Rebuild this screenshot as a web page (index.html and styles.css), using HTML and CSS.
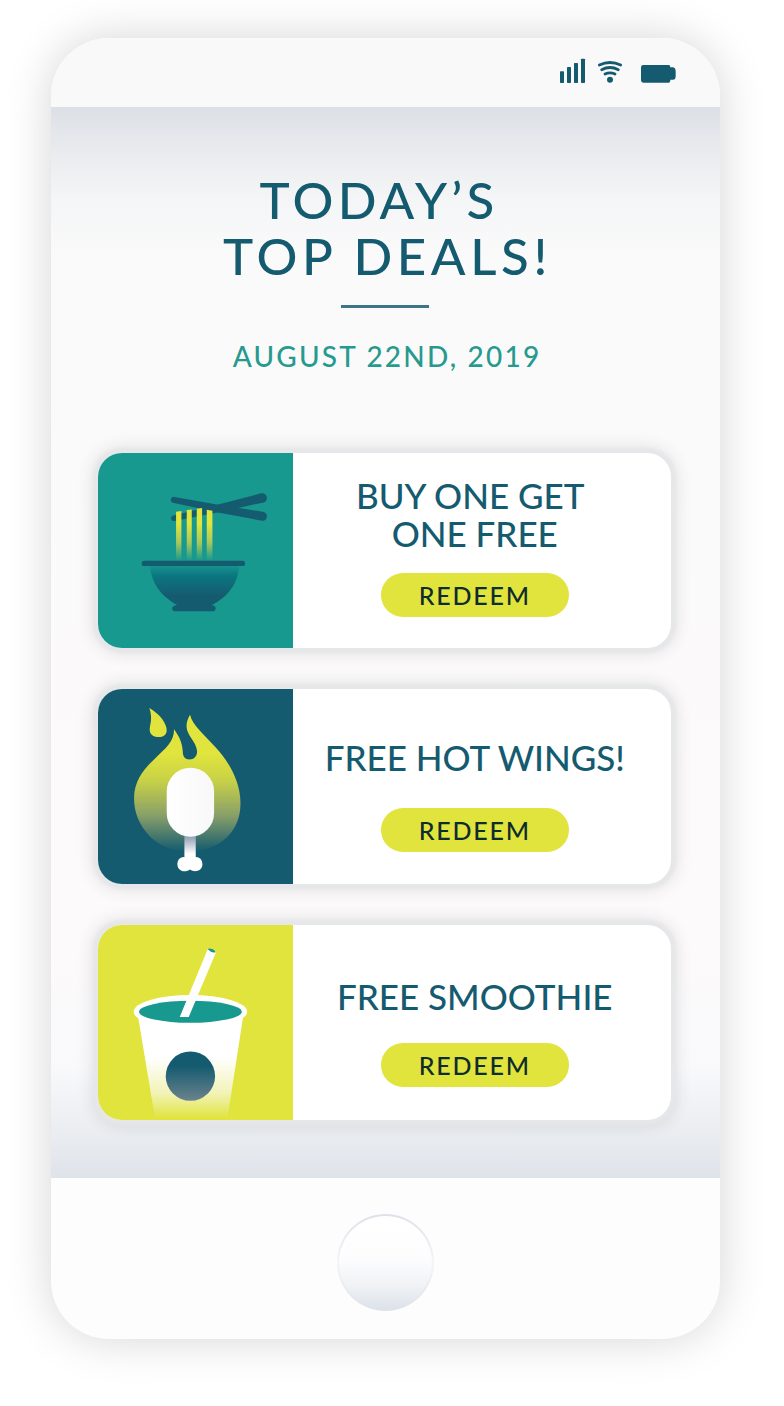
FILE: index.html
```
<!DOCTYPE html>
<html lang="en">
  <head>
    <meta charset="utf-8">
    <title>Today's Top Deals</title>
    <link rel="stylesheet" href="styles.css">
  </head>
  <body>
    <div class="phone">
      <!-- Status bar -->
      <header class="status-bar">
        <svg class="status-icons" viewBox="57 84 354 78">
          <g fill="#155b70">
            <rect x="60" y="124" width="12" height="35" rx="2"/>
            <rect x="81" y="111" width="12" height="48" rx="2"/>
            <rect x="102" y="99" width="12" height="60" rx="2"/>
            <rect x="123" y="86" width="12" height="73" rx="2"/>
            <circle cx="210" cy="149" r="9"/>
            <path d="M310 105H386Q391 105 391 112H400Q407 114 407 122V140Q407 148 400 149H391Q391 158 386 158H310Q303 158 303 151V112Q303 105 310 105Z"/>
          </g>
          <g fill="none" stroke="#155b70" stroke-width="8.5" stroke-linecap="round">
            <path d="M178 105Q210 90 242 105"/>
            <path d="M185 119Q210 106 235 119"/>
            <path d="M195 132Q210 125 225 132"/>
          </g>
        </svg>
      </header>

      <!-- Deals -->
      <main class="screen">
        <h1><span class="today">TODAY’S</span><span class="top">TOP DEALS!</span></h1>
        <div class="rule"></div>
        <p class="date">AUGUST 22ND, 2019</p>

        <div class="deals">
          <section class="card">
            <svg class="art noodles" viewBox="25 39 583 583">
              <defs>
                <linearGradient id="bowl" x1="0" y1="0" x2="0" y2="1">
                  <stop offset="0" stop-color="#17948e"/>
                  <stop offset=".25" stop-color="#0b7780"/>
                  <stop offset=".75" stop-color="#155b70"/>
                </linearGradient>
                <linearGradient id="noodle" gradientUnits="userSpaceOnUse" x1="0" y1="204" x2="0" y2="362">
                  <stop offset=".3" stop-color="#e0e43d"/>
                  <stop offset=".65" stop-color="#a9c85b"/>
                  <stop offset="1" stop-color="#17998f"/>
                </linearGradient>
              </defs>
              <g fill="#155b70">
                <path d="M251 170L385 194L519 215Q532 217 531 230Q530 243 516 242L384 217L249 188Q243 186 243 179Q244 171 251 170Z"/>
                <path d="M249 227L385 193L514 160Q526 157 531 170Q533 182 522 187L390 216L254 243Q246 244 244 236Q243 229 249 227Z"/>
              </g>
              <g fill="url(#noodle)">
                <path d="M259 215L275 213V362H259Z"/>
                <path d="M291 210L306 208V362H291Z"/>
                <path d="M321 206L337 204V362H321Z"/>
                <path d="M351 209L368 212V362H351Z"/>
              </g>
              <path d="M181 376H448C446 428 414 472 363 496H266C216 472 184 428 181 376Z" fill="url(#bowl)"/>
              <rect x="156" y="362" width="310" height="16" rx="8" fill="#155b70"/>
              <path d="M256 496L268 491H358L370 496Q378 498 378 505Q377 513 370 513H256Q248 513 247 505Q248 498 256 496Z" fill="#155b70"/>
            </svg>
            <div class="info info-noodles">
              <h2><span class="buy">BUY ONE GET</span><span>ONE FREE</span></h2>
              <button>REDEEM</button>
            </div>
          </section>

          <section class="card">
            <svg class="art wings" viewBox="25 28 583 583">
              <defs>
                <linearGradient id="flame" gradientUnits="userSpaceOnUse" x1="0" y1="85" x2="0" y2="515">
                  <stop offset=".32" stop-color="#e0e43d"/>
                  <stop offset=".5" stop-color="#c9d246"/>
                  <stop offset=".75" stop-color="#889f69"/>
                  <stop offset="1" stop-color="#155b70"/>
                </linearGradient>
                <linearGradient id="bone" x1="0" y1="0" x2="0" y2="1">
                  <stop offset="0" stop-color="#8292ac"/>
                  <stop offset=".25" stop-color="#a5afc3"/>
                  <stop offset=".8" stop-color="#fff"/>
                </linearGradient>
                <linearGradient id="meat">
                  <stop offset="0" stop-color="#fff"/>
                  <stop offset="1" stop-color="#f8f8f9"/>
                </linearGradient>
              </defs>
              <g fill="url(#flame)">
                <path d="M179 85C211 103 232 133 231 153C230 166 220 172 207 172C190 172 180 163 180 150C180 134 190 120 179 85Z"/>
                <path d="M253 149C267 169 277 186 279 214C279 232 286 239 299 239C313 239 322 229 322 215C321 191 299 174 292 151C288 135 292 119 301 105C308 137 342 163 378 203C417 246 454 307 452 374C451 459 386 515 293 515C202 515 133 441 133 356C133 305 161 270 190 242C228 205 253 187 253 149Z"/>
              </g>
              <rect x="284" y="460" width="34" height="78" fill="url(#bone)"/>
              <path d="M284 532C269 531 263 543 263 554C263 574 287 580 301 569C315 580 338 572 338 554C338 543 332 531 317 532Z" fill="#fff"/>
              <rect x="231" y="264" width="142" height="207" rx="71" fill="url(#meat)"/>
            </svg>
            <div class="info info-wings">
              <h2>FREE HOT WINGS!</h2>
              <button>REDEEM</button>
            </div>
          </section>

          <section class="card">
            <svg class="art smoothie" viewBox="25 31 583 583">
              <defs>
                <linearGradient id="cup" x1="0" y1="0" x2="0" y2="1">
                  <stop offset=".4" stop-color="#fff"/>
                  <stop offset=".75" stop-color="#f2f3b8"/>
                  <stop offset="1" stop-color="#e0e43d"/>
                </linearGradient>
                <linearGradient id="label" x1="0" y1="0" x2="0" y2="1">
                  <stop offset=".3" stop-color="#155b70"/>
                  <stop offset="1" stop-color="#6b838c"/>
                </linearGradient>
              </defs>
              <path d="M145 305H460L413 611H196Z" fill="url(#cup)"/>
              <ellipse cx="302" cy="291" rx="170" ry="50" fill="#fff"/>
              <ellipse cx="302" cy="291" rx="154" ry="33" fill="#17998f"/>
              <path d="M354 103L378 114L297 307H270Z" fill="#fff"/>
              <path d="M354 104Q357 99 367 103Q378 108 376 113Q366 116 354 104Z" fill="#17998f"/>
              <circle cx="302" cy="484" r="74" fill="url(#label)"/>
            </svg>
            <div class="info info-smoothie">
              <h2>FREE SMOOTHIE</h2>
              <button>REDEEM</button>
            </div>
          </section>
        </div>
      </main>

      <!-- Home button -->
      <footer class="bottom-bar">
        <div class="home"></div>
      </footer>
    </div>
  </body>
</html>
```
FILE: styles.css
```
body {
  margin: 0;
  background: #fff;
  font-family: "Lato", sans-serif;
  color: #155b70;
}

h1, h2, p {
  margin: 0;
  font-weight: 500;
}

h1 span, h2 span {
  display: block;
}

.phone {
  width: 669px;
  height: 1301px;
  margin: 38px 0 67px 51px;
  border-radius: 58px;
  overflow: hidden;
  display: flex;
  flex-direction: column;
  background: #fdfdfe;
  box-shadow: 0 0 46px rgba(0, 0, 0, 0.17);
}

/* Status bar */
.status-bar {
  height: 69px;
  display: flex;
  justify-content: flex-end;
  align-items: flex-start;
  padding: 20px 43px 0 0;
  box-sizing: border-box;
  background: #f9f9f9;
}
.status-icons {
  width: 118px;
  height: 26px;
}

/* Screen */
.screen {
  height: 1071px;
  box-sizing: border-box;
  padding: 65px 49px 0 47px;
  background: linear-gradient(#dce0e6 0, #e9ebee 45px, #f4f5f6 90px, #fafafb 150px, #fbfafb 300px, #fcfafb 850px, #f9f9fb 960px, #e9ecf0 1030px, #dfe3ea 1071px);
}

h1 {
  font-size: 51px;
  line-height: 56px;
  text-align: center;
}
.today {
  padding-right: 11px;
  letter-spacing: 4.2px;
}
.top {
  padding-left: 6px;
  letter-spacing: 4.6px;
}

.rule {
  width: 88px;
  height: 2.5px;
  margin: 21px auto 0 243px;
  background: #3f7487;
}

.date {
  margin-top: 31.5px;
  padding-left: 5px;
  font-size: 28px;
  line-height: 34px;
  text-align: center;
  letter-spacing: 2.2px;
  color: #279a8f;
}

/* Cards */
.deals {
  display: grid;
  gap: 41.5px;
  margin-top: 80px;
}
.card {
  height: 194.5px;
  display: flex;
  border-radius: 24px;
  background: #fff;
  box-shadow: 0 0 3px 5px #e6e7e9, 0 0 16px 6px rgba(60, 50, 60, 0.12);
}
.art {
  width: 194.5px;
  height: 194.5px;
  border-radius: 24px 0 0 24px;
}
.noodles {
  background: #17998f;
}
.wings {
  background: #155b70;
}
.smoothie {
  background: #e0e43d;
}

.info {
  flex: 1;
  display: flex;
  flex-direction: column;
  align-items: center;
  padding-right: 14px;
}
.info h2 {
  font-size: 35px;
  line-height: 38px;
  text-align: center;
}
.info-noodles {
  padding-top: 23px;
  gap: 21px;
}
.info-wings {
  padding-top: 48.5px;
  gap: 32px;
}
.info-smoothie {
  padding-top: 52px;
  gap: 28px;
}
.buy {
  padding-right: 9px;
}

button {
  width: 188px;
  height: 44px;
  padding: 0;
  border: none;
  border-radius: 22px;
  background: #e0e43d;
  font: 500 25px/44px "Lato", sans-serif;
  letter-spacing: 1.8px;
  color: #0f2c2c;
}

/* Home button */
.bottom-bar {
  flex: 1;
  display: flex;
  justify-content: center;
  align-items: flex-start;
  padding-top: 36px;
}
.home {
  width: 97px;
  height: 97px;
  border-radius: 50%;
  background: linear-gradient(#fff 0, #fdfdfe 45%, #f0f2f5 75%, #dde2ea) content-box, linear-gradient(#dde1e9, #f4f5f7 50%, #dde2ea);
  padding: 2px;
  box-sizing: border-box;
}
```
